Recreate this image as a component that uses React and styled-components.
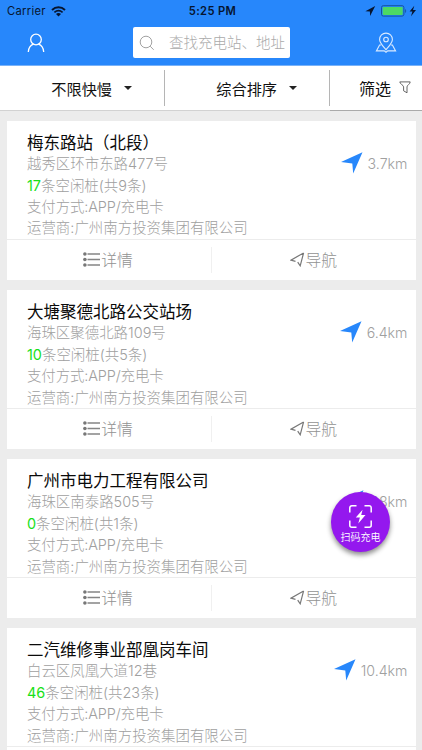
import React from 'react'
import styled, { createGlobalStyle } from 'styled-components'

const GlobalStyle = createGlobalStyle`
  * {
    box-sizing: border-box;
  }

  body {
    margin: 0;
    overflow: hidden;
    background-color: #ececec;
    font-family: Inter, 'Noto Sans CJK SC', sans-serif;
  }

  button {
    padding: 0;
    border: 0;
    background: none;
    font: inherit;
    color: inherit;
  }
`

const Screen = styled.div`
  position: relative;
  width: 422px;
  height: 750px;
  overflow: hidden;
  background-color: #ececec;
`

const Header = styled.header`
  height: 66px;
  background-color: #2787fb;
  border-bottom: 1px solid #79b2f8;
`

const StatusBar = styled.div`
  display: grid;
  grid-template-columns: 1fr auto 1fr;
  align-items: center;
  height: 22px;
  padding: 0 4px 0 7px;
  color: #061530;
  font-size: 11.2px;
  letter-spacing: 0.3px;
`

const StatusGroup = styled.div`
  display: flex;
  align-items: center;
  justify-content: ${({ end }) => (end ? 'flex-end' : 'flex-start')};
  gap: ${({ end }) => (end ? 0 : '5px')};

  svg {
    display: block;
  }
`

const Clock = styled.div`
  font-size: 11.2px;
  font-weight: 600;
  letter-spacing: 0.35px;
`

const NavBar = styled.div`
  display: flex;
  align-items: center;
  justify-content: space-between;
  height: 41px;
  padding: 0 25px 0 27px;

  svg {
    display: block;
  }
`

const SearchBox = styled.div`
  display: flex;
  align-items: center;
  width: 157px;
  height: 31px;
  margin-left: 3px;
  padding-left: 6px;
  border-radius: 2px;
  background-color: #fff;
  color: #aaa;
  font-size: 14.5px;
  font-weight: 300;
  white-space: nowrap;

  span {
    margin-left: 14px;
    padding-bottom: 2px;
  }
`

const FilterBar = styled.nav`
  display: grid;
  grid-template-columns: 165px 165px 92px;
  height: 45px;
  background-color: #fff;
`

const FilterCell = styled.div`
  padding-top: 4px;
  border-bottom: 1px solid ${({ last }) => (last ? '#aaa' : '#d2d2d2')};
`

const Filter = styled.button`
  display: flex;
  align-items: center;
  justify-content: ${({ last }) => (last ? 'flex-start' : 'flex-end')};
  gap: ${({ last }) => (last ? '8px' : '12px')};
  width: 100%;
  height: 36px;
  padding: ${({ last }) => (last ? '0 0 1px 29px' : '0 32px 1px 0')};
  border-right: ${({ last }) => (last ? 0 : '1px solid #b5b5b5')};
  color: #111;
  font-size: ${({ last }) => (last ? '16px' : '15.2px')};
  white-space: nowrap;
`

const Caret = styled.i`
  border: 4px solid transparent;
  border-top-color: #222;
  border-bottom: 0;
`

const List = styled.main`
  display: flex;
  flex-direction: column;
  gap: 10px;
  padding: 10px 6px 0 6.5px;
`

const Card = styled.article`
  flex: none;
  height: 159.1px;
  background-color: #fff;
`

const CardBody = styled.div`
  display: flex;
  justify-content: space-between;
  height: 118px;
  padding: 10px 8.5px 0 20.5px;
`

const Title = styled.h2`
  margin: 0;
  padding-top: 3px;
  color: #0a0a0a;
  font-size: 16.5px;
  font-weight: 400;
  line-height: 19.2px;
  white-space: nowrap;
`

const Line = styled.p`
  margin: 0;
  color: #a0a0a0;
  font-size: 14.45px;
  font-weight: 300;
  line-height: 21.4px;
  letter-spacing: ${({ tight }) => (tight ? '-0.12px' : 'normal')};
  white-space: nowrap;
`

const Idle = styled.span`
  color: #18e018;
  font-weight: 400;
`

const Distance = styled.div`
  display: flex;
  align-items: center;
  gap: 5px;
  height: 22px;
  margin-top: 21px;
  color: #a0a0a0;
  font-size: 14.2px;
  font-weight: 300;

  svg {
    display: block;
  }
`

const Actions = styled.div`
  display: flex;
  height: 41px;
  border-top: 1px solid #ececec;
`

const Action = styled.button`
  display: flex;
  flex: 1;
  align-items: center;
  justify-content: center;
  gap: 1px;
  margin: 7px 0;
  padding: 0 1px 2px 0;
  color: #929292;
  font-size: 15.8px;
  font-weight: 300;

  & + & {
    border-left: 1px solid #f0f0f0;
  }

  svg {
    display: block;
  }
`

const ScanButton = styled.button`
  position: absolute;
  top: 492px;
  left: 331px;
  display: flex;
  flex-direction: column;
  align-items: center;
  width: 59px;
  height: 60px;
  padding-top: 13px;
  border-radius: 50%;
  background-color: #9418ee;
  box-shadow: 0 3px 5px rgba(0, 0, 0, 0.45);
  color: #fff;
  font-size: 10px;
  font-weight: 350;
  line-height: 15px;
  white-space: nowrap;

  svg {
    display: block;
    margin-bottom: 2px;
  }
`

const WifiIcon = () => (
  <svg width="15" height="11" viewBox="0 0 15 11" fill="none" stroke="#061530">
    <path d="M1 3.9C4.8.5 10.2.5 14 3.9" strokeWidth="2" />
    <path d="M3.4 6.4c2.5-2.1 5.7-2.1 8.2 0" strokeWidth="1.8" />
    <path d="M7.5 10.5 5 8c1.5-1.2 3.5-1.2 5 0z" fill="#061530" stroke="none" />
  </svg>
)

const BatteryIcons = () => (
  <svg width="54" height="14" viewBox="0 0 54 14">
    <path d="M11.2 2.1 1.4 7.2l4.5.2.2 4.6z" fill="#061530" />
    <rect x="17.5" y="1.7" width="22.4" height="10.4" rx="1.8" fill="none" stroke="#15549f" />
    <rect x="18.7" y="2.9" width="20" height="8" rx="0.8" fill="#4cd964" />
    <path d="M41.2 5v4c1.3-.5 1.3-3.5 0-4z" fill="#15549f" />
    <path d="M50.3 1.8 45.6 7.6h2.8L47 12.2l5-6.1h-3z" fill="#061530" />
  </svg>
)

const UserIcon = () => (
  <svg width="18" height="20" viewBox="0 0 18 20" fill="none" stroke="#fff" strokeWidth="1.3">
    <circle cx="9" cy="6.5" r="5.3" />
    <path d="M1.3 19c.3-4.2 2.6-7 5.3-7.8M16.7 19c-.3-4.2-2.6-7-5.3-7.8" />
  </svg>
)

const SearchIcon = () => (
  <svg width="16" height="16" viewBox="0 0 16 16" fill="none" stroke="#a2a2a2">
    <circle cx="7" cy="7" r="5.8" />
    <path d="m11.2 11.2 3.5 3.6" />
  </svg>
)

const MapIcon = () => (
  <svg width="22" height="21" viewBox="0 0 22 21" fill="none" stroke="#d9eaff" strokeWidth="1.1">
    <path d="M11 17.8C7.5 13.6 4.6 10.8 4.6 7.5a6.4 6.4 0 0 1 12.8 0c0 3.3-2.9 6.1-6.4 10.3z" />
    <circle cx="11" cy="7.5" r="2.3" />
    <path d="M6.2 13H4.6L1.4 18.9h7.8l1.8 1.3 1.8-1.3h7.8L17.4 13h-1.6" />
  </svg>
)

const FunnelIcon = () => (
  <svg width="12" height="13" viewBox="0 0 12 13" fill="none" stroke="#555" strokeWidth="0.9">
    <path d="M.8.9h10.4c0 2.2-3.2 3.2-3.2 5v5.9L4.6 9.8V5.9C4.6 4 .8 3.1.8.9z" />
  </svg>
)

const ArrowIcon = () => (
  <svg width="22" height="22" viewBox="0 0 22 22">
    <path d="M21.5.3 0 9.9l11.3 1.5.9 10z" fill="#2787fb" />
  </svg>
)

const ListIcon = () => (
  <svg width="17" height="15" viewBox="0 0 17 15" fill="#777" stroke="#858585">
    <path d="M4.5 2H17M4.5 7.5H17M4.5 13H17" strokeWidth="1.3" />
    <g stroke="none">
      <circle cx="1.9" cy="2" r="1.8" />
      <circle cx="1.9" cy="7.5" r="1.8" />
      <circle cx="1.9" cy="13" r="1.8" />
    </g>
  </svg>
)

const NavigateIcon = () => (
  <svg width="15" height="15" viewBox="0 0 15 15" fill="none" stroke="#777" strokeWidth="1.2">
    <path d="M13.6.9.9 8.2l4.6 1.2M13.6.9l-3.4 12.9-2.5-3.6" />
  </svg>
)

const ScanIcon = () => (
  <svg width="23" height="23" viewBox="0 0 23 23" fill="none" stroke="#fff" strokeWidth="1.5">
    <path d="M.8 7.5V2.8a2 2 0 0 1 2-2h4.7M15.5.8h4.7a2 2 0 0 1 2 2v4.7M22.2 15.5v4.7a2 2 0 0 1-2 2h-4.7M7.5 22.2H2.8a2 2 0 0 1-2-2v-4.7" />
    <path d="M13.6 4.8 6.8 12.5h4.1l-1.6 5.9 7.2-8.3h-4.3z" fill="#fff" stroke="none" />
  </svg>
)

const stations = [
  { name: '梅东路站（北段）', address: '越秀区环市东路477号', idle: 17, total: 9, distance: '3.7km' },
  { name: '大塘聚德北路公交站场', address: '海珠区聚德北路109号', idle: 10, total: 5, distance: '6.4km' },
  { name: '广州市电力工程有限公司', address: '海珠区南泰路505号', idle: 0, total: 1, distance: '7.8km' },
  { name: '二汽维修事业部凰岗车间', address: '白云区凤凰大道12巷', idle: 46, total: 23, distance: '10.4km' },
]

const Station = ({ name, address, idle, total, distance }) => (
  <Card>
    <CardBody>
      <div>
        <Title>{name}</Title>
        <Line>{address}</Line>
        <Line>
          <Idle>{idle}</Idle>条空闲桩(共{total}条)
        </Line>
        <Line tight>支付方式:APP/充电卡</Line>
        <Line>运营商:广州南方投资集团有限公司</Line>
      </div>
      <Distance>
        <ArrowIcon />
        <span>{distance}</span>
      </Distance>
    </CardBody>
    <Actions>
      <Action>
        <ListIcon />
        详情
      </Action>
      <Action>
        <NavigateIcon />
        导航
      </Action>
    </Actions>
  </Card>
)

const App = () => (
  <>
    <GlobalStyle />
    <Screen>
      <Header>
        <StatusBar>
          <StatusGroup>
            Carrier
            <WifiIcon />
          </StatusGroup>
          <Clock>5:25 PM</Clock>
          <StatusGroup end>
            <BatteryIcons />
          </StatusGroup>
        </StatusBar>
        <NavBar>
          <UserIcon />
          <SearchBox>
            <SearchIcon />
            <span>查找充电站、地址</span>
          </SearchBox>
          <MapIcon />
        </NavBar>
      </Header>
      <FilterBar>
        <FilterCell>
          <Filter>
            不限快慢
            <Caret />
          </Filter>
        </FilterCell>
        <FilterCell>
          <Filter>
            综合排序
            <Caret />
          </Filter>
        </FilterCell>
        <FilterCell last>
          <Filter last>
            筛选
            <FunnelIcon />
          </Filter>
        </FilterCell>
      </FilterBar>
      <List>
        {stations.map((station) => (
          <Station key={station.name} {...station} />
        ))}
      </List>
      <ScanButton>
        <ScanIcon />
        扫码充电
      </ScanButton>
    </Screen>
  </>
)

export default App
